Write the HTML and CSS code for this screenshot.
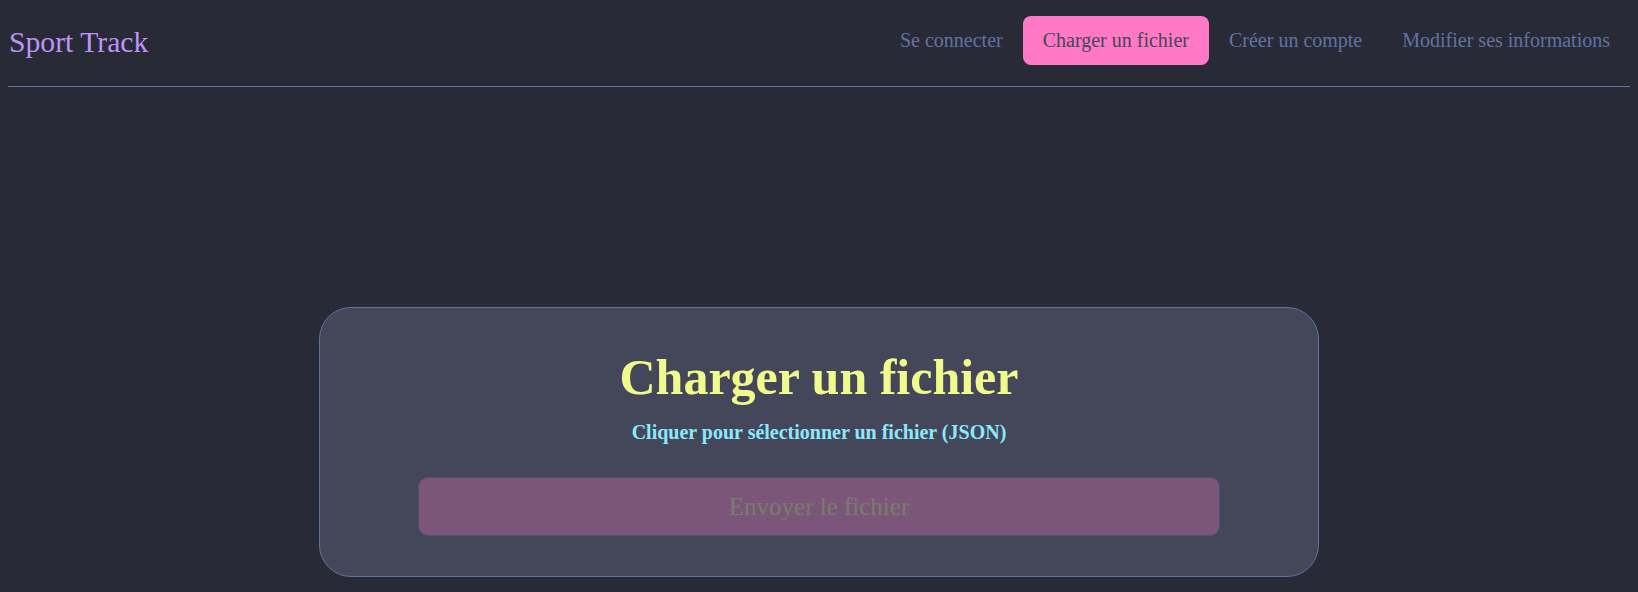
FILE: index.html
```html
<!DOCTYPE html>
<html lang="fr">
<head>
<meta charset="utf-8">
<title>Sport Track</title>
<link rel="stylesheet" href="styles.css">
</head>
<body>
<header class="topbar">
  <a class="brand" href="#">Sport Track</a>
  <nav class="nav">
    <a class="nav-link" href="#">Se connecter</a>
    <a class="nav-link active" href="#">Charger un fichier</a>
    <a class="nav-link" href="#">Créer un compte</a>
    <a class="nav-link" href="#">Modifier ses informations</a>
  </nav>
</header>
<main class="main">
  <section class="card">
    <h1 class="card-title">Charger un fichier</h1>
    <label class="file-label" for="file">Cliquer pour sélectionner un fichier (JSON)</label>
    <input class="file-input" id="file" type="file" accept=".json">
    <button class="send-btn" type="submit" disabled>Envoyer le fichier</button>
  </section>
</main>
</body>
</html>
```

FILE: styles.css
```css
html, body {
  background: #282a36;
}
body {
  margin: 8px;
  font-family: "Liberation Serif", "Times New Roman", serif;
  color: #f8f8f2;
}
a {
  text-decoration: none;
}
.topbar {
  display: flex;
  align-items: center;
  justify-content: space-between;
  padding: 8px 0 21px 0;
  border-bottom: 1px solid #6272a4;
}
.brand {
  color: #bd93f9;
  font-size: 29.7px;
  line-height: 34px;
  margin-top: 3px;
  padding-left: 1px;
}
.nav {
  display: flex;
  align-items: center;
}
.nav-link {
  display: block;
  color: #6272a4;
  font-size: 20px;
  line-height: 23px;
  padding: 13px 20px;
  border-radius: 8px;
}
.nav-link.active {
  background: #ff79c6;
  color: #44475a;
}
.main {
  display: flex;
  justify-content: center;
}
.card {
  box-sizing: border-box;
  width: 1000px;
  margin-top: 220px;
  padding: 40px 0 40px 0;
  background: #44475a;
  border: 1px solid #6272a4;
  border-radius: 32px;
  text-align: center;
}
.card-title {
  margin: 0;
  font-size: 50px;
  line-height: 58px;
  font-weight: bold;
  color: #f1fa8c;
}
.file-label {
  display: block;
  margin-top: 15px;
  font-size: 20px;
  line-height: 23px;
  font-weight: bold;
  color: #8be9fd;
  cursor: pointer;
}
.file-input {
  display: none;
}
.send-btn {
  display: block;
  box-sizing: border-box;
  width: 802px;
  margin: 33px auto 0 auto;
  padding: 14px 0;
  font-family: "Liberation Serif", "Times New Roman", serif;
  font-size: 25px;
  line-height: 29px;
  color: #f1fa8c;
  background: #ff79c6;
  border: 1px solid #6272a4;
  border-radius: 10px;
  opacity: 0.3;
}
```
